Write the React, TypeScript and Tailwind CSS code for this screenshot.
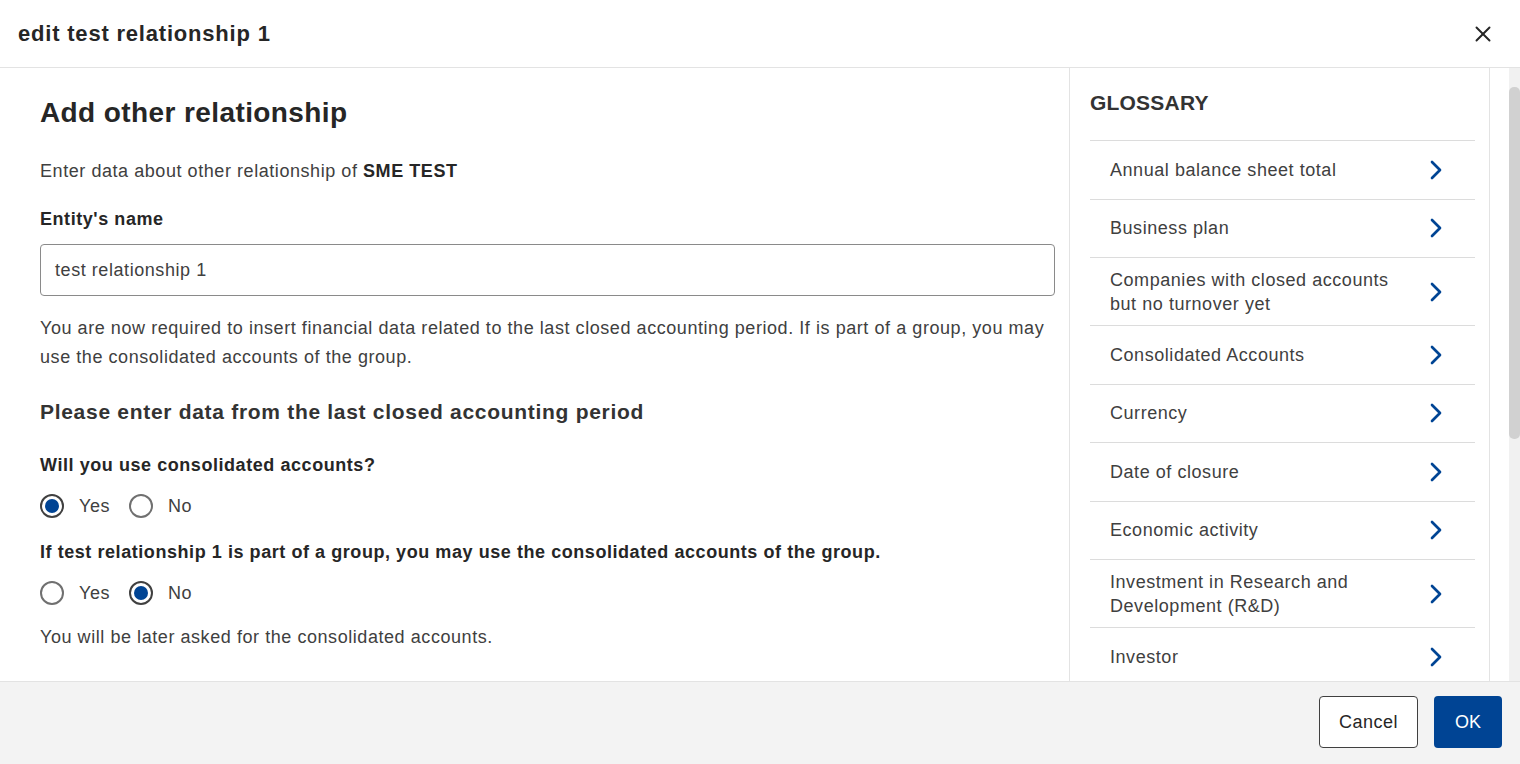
import { ChevronRight, X } from 'lucide-react'

const glossary = [
  'Annual balance sheet total',
  'Business plan',
  'Companies with closed accounts but no turnover yet',
  'Consolidated Accounts',
  'Currency',
  'Date of closure',
  'Economic activity',
  'Investment in Research and Development (R&D)',
  'Investor',
]

function Radio({ checked, label }: { checked?: boolean; label: string }) {
  return (
    <label className="flex items-center gap-[15px]">
      <span
        className={
          'flex h-[24px] w-[24px] items-center justify-center rounded-full border-2 ' +
          (checked ? 'border-[#404040]' : 'border-[#707070]')
        }
      >
        {checked ? <span className="h-[14px] w-[14px] rounded-full bg-[#004494]" /> : null}
      </span>
      <span className="text-[18px] leading-[28px] tracking-[0.55px] text-[#404040]">{label}</span>
    </label>
  )
}

function RadioGroup({ value }: { value: 'yes' | 'no' }) {
  return (
    <div className="flex items-center gap-[19px]">
      <Radio label="Yes" checked={value === 'yes'} />
      <Radio label="No" checked={value === 'no'} />
    </div>
  )
}

export default function App() {
  return (
    <div className="flex h-[764px] w-[1520px] flex-col overflow-hidden bg-white font-['Liberation_Sans',Arial,sans-serif] text-[#404040]">
      <header className="flex h-[68px] shrink-0 items-center justify-between border-b border-[#e3e3e3] pl-[18px] pr-[24px]">
        <h1 className="text-[22px] font-bold tracking-[0.8px] text-[#262626]">edit test relationship 1</h1>
        <button type="button" className="text-[#262626]">
          <X size={26} strokeWidth={1.8} />
        </button>
      </header>

      <div className="flex h-[613px] shrink-0 overflow-hidden">
        <main className="w-[1069px] shrink-0 pl-[40px] pr-[14px] pt-[28px] tracking-[0.56px]">
          <h2 className="text-[28px] font-bold leading-[34px] tracking-[0.4px] text-[#262626]">Add other relationship</h2>
          <p className="mt-[27px] text-[18px] leading-[28px]">
            Enter data about other relationship of <strong className="text-[#262626]">SME TEST</strong>
          </p>
          <p className="mt-[20px] text-[18px] font-bold leading-[28px] text-[#262626]">Entity's name</p>
          <div className="mt-[11px] flex h-[52px] items-center rounded-[4px] border border-[#8a8a8a] px-[14px] text-[18px]">
            test relationship 1
          </div>
          <p className="mt-[18px] text-[18px] leading-[29px]">
            You are now required to insert financial data related to the last closed accounting period. If is part of a group, you may use the consolidated accounts of the group.
          </p>
          <h3 className="mt-[26px] text-[21px] font-bold leading-[28px] tracking-[0.7px] text-[#333333]">
            Please enter data from the last closed accounting period
          </h3>
          <p className="mt-[25px] text-[18px] font-bold leading-[28px] text-[#262626]">Will you use consolidated accounts?</p>
          <div className="mt-[13px]">
            <RadioGroup value="yes" />
          </div>
          <p className="mt-[18px] text-[18px] font-bold leading-[28px] text-[#262626]">
            If test relationship 1 is part of a group, you may use the consolidated accounts of the group.
          </p>
          <div className="mt-[13px]">
            <RadioGroup value="no" />
          </div>
          <p className="mt-[16px] text-[18px] leading-[28px]">You will be later asked for the consolidated accounts.</p>
        </main>

        <aside className="w-[421px] shrink-0 border-x border-[#e3e3e3] pl-[20px] pr-[14px] pt-[21px]">
          <h2 className="text-[21px] font-bold leading-[28px] tracking-[0.2px] text-[#333333]">GLOSSARY</h2>
          <ul className="mt-[23px]">
            {glossary.map((item) => (
              <li
                key={item}
                className="flex min-h-[58.5px] items-center justify-between border-t border-[#dcdcdc] py-[9.5px] pl-[20px] pr-[23px]"
              >
                <span className="max-w-[290px] text-[18px] leading-[24px] tracking-[0.55px] text-[#404040]">{item}</span>
                <ChevronRight size={32} strokeWidth={2} className="shrink-0 text-[#004494]" />
              </li>
            ))}
          </ul>
        </aside>

        <div className="flex flex-1 justify-end">
          <div className="h-full w-[11px] bg-[#f1f1f1] pt-[19px]">
            <div className="h-[352px] w-full rounded-[5px] bg-[#d1d1d1]" />
          </div>
        </div>
      </div>

      <footer className="flex flex-1 items-start justify-end gap-[16px] border-t border-[#e3e3e3] bg-[#f3f3f3] pr-[18px] pt-[14px]">
        <button
          type="button"
          className="h-[52px] w-[99px] rounded-[4px] border border-[#404040] bg-white text-[18px] tracking-[0.5px] text-[#262626]"
        >
          Cancel
        </button>
        <button type="button" className="h-[52px] w-[68px] rounded-[4px] bg-[#004494] text-[18px] text-white">
          OK
        </button>
      </footer>
    </div>
  )
}
